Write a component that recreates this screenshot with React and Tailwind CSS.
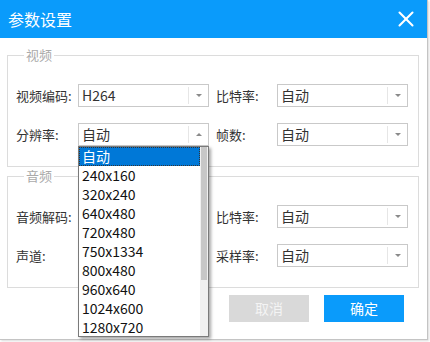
import { X } from 'lucide-react'

const FONT = { fontFamily: '"Noto Sans CJK SC", "Noto Sans", sans-serif' }

const OPTIONS = ['自动', '240x160', '320x240', '640x480', '720x480', '750x1334', '800x480', '960x640', '1024x600', '1280x720']

function Arrow({ up }) {
  return up ? (
    <div className="w-0 h-0 border-x-[3px] border-b-[3px] border-x-transparent border-b-[#8a8a8a]" />
  ) : (
    <div className="w-0 h-0 border-x-[3px] border-t-[3px] border-x-transparent border-t-[#8a8a8a]" />
  )
}

function Select({ value, open }) {
  return (
    <div className="relative w-[131px] h-[23px] border border-[#c9c9c9] bg-white flex items-stretch">
      <span className="flex-1 pl-[3px] text-[14px] leading-[21px] text-[#333]">{value}</span>
      <div className="w-[20px] my-[2px] border-l border-[#e6e6e6] flex items-center justify-center">
        <Arrow up={open} />
      </div>
      {open && (
        <div className="absolute left-[-1px] top-[22px] w-[131px] h-[191px] border border-[#7a7a7a] bg-white flex shadow-[2px_2px_3px_rgba(0,0,0,0.35)] z-10">
          <div className="flex-1 flex flex-col">
            {OPTIONS.map((o, i) => (
              <div
                key={o}
                className={
                  i === 0
                    ? 'h-[19px] pl-[2px] text-[14px] leading-[17px] text-white bg-[#0078d7] border border-dotted border-[#333]'
                    : 'h-[19px] pl-[3px] text-[14px] leading-[19px] text-[#111]'
                }
              >
                {o}
              </div>
            ))}
          </div>
          <div className="w-[8px] bg-[#f0f0f0] flex justify-center">
            <div className="w-[6px] h-[133px] bg-[#c7c7c7]" />
          </div>
        </div>
      )}
    </div>
  )
}

function Row({ l1, v1, l2, v2, open }) {
  return (
    <div className="flex items-center h-[23px]">
      <span className="w-[62px] text-[13px] text-[#333]">{l1}</span>
      <Select value={v1} open={open} />
      <span className="ml-[7px] w-[61px] text-[13px] text-[#333]">{l2}</span>
      <Select value={v2} />
    </div>
  )
}

function Group({ title, children, mt }) {
  return (
    <div className={`${mt} ml-[7px] w-[412px] border border-[#dcdcdc] pl-[8px] pb-[20px]`}>
      <span className="block w-fit -mt-[9px] ml-[8px] px-[2px] bg-white text-[13px] leading-[16px] text-[#aaa]">
        {title}
      </span>
      <div className="mt-[21px] flex flex-col gap-[16px]">{children}</div>
    </div>
  )
}

export default function App() {
  return (
    <div className="w-[430px] h-[342px] bg-white" style={FONT}>
      <div className="w-[428px] h-[340px] bg-white border-r border-b border-[#c4c4c4] shadow-[1px_1px_2px_rgba(0,0,0,0.15)]">
        <div className="h-[38px] bg-[#0a9bfb] flex items-center justify-between pl-[8px] pr-[8px]">
          <span className="text-[16px] text-white">参数设置</span>
          <X size={26} strokeWidth={1.9} className="text-white" />
        </div>

        <Group title="视频" mt="mt-[17px]">
          <Row l1="视频编码:" v1="H264" l2="比特率:" v2="自动" />
          <Row l1="分辨率:" v1="自动" l2="帧数:" v2="自动" open />
        </Group>

        <Group title="音频" mt="mt-[9px]">
          <Row l1="音频解码:" v1="" l2="比特率:" v2="自动" />
          <Row l1="声道:" v1="" l2="采样率:" v2="自动" />
        </Group>

        <div className="mt-[7px] flex justify-end gap-[15px] pr-[23px]">
          <button className="w-[80px] h-[27px] bg-[#d9d9d9] text-[14px] text-[#f4f4f4]">取消</button>
          <button className="w-[80px] h-[27px] bg-[#0a9bfb] text-[14px] text-white">确定</button>
        </div>
      </div>
    </div>
  )
}
